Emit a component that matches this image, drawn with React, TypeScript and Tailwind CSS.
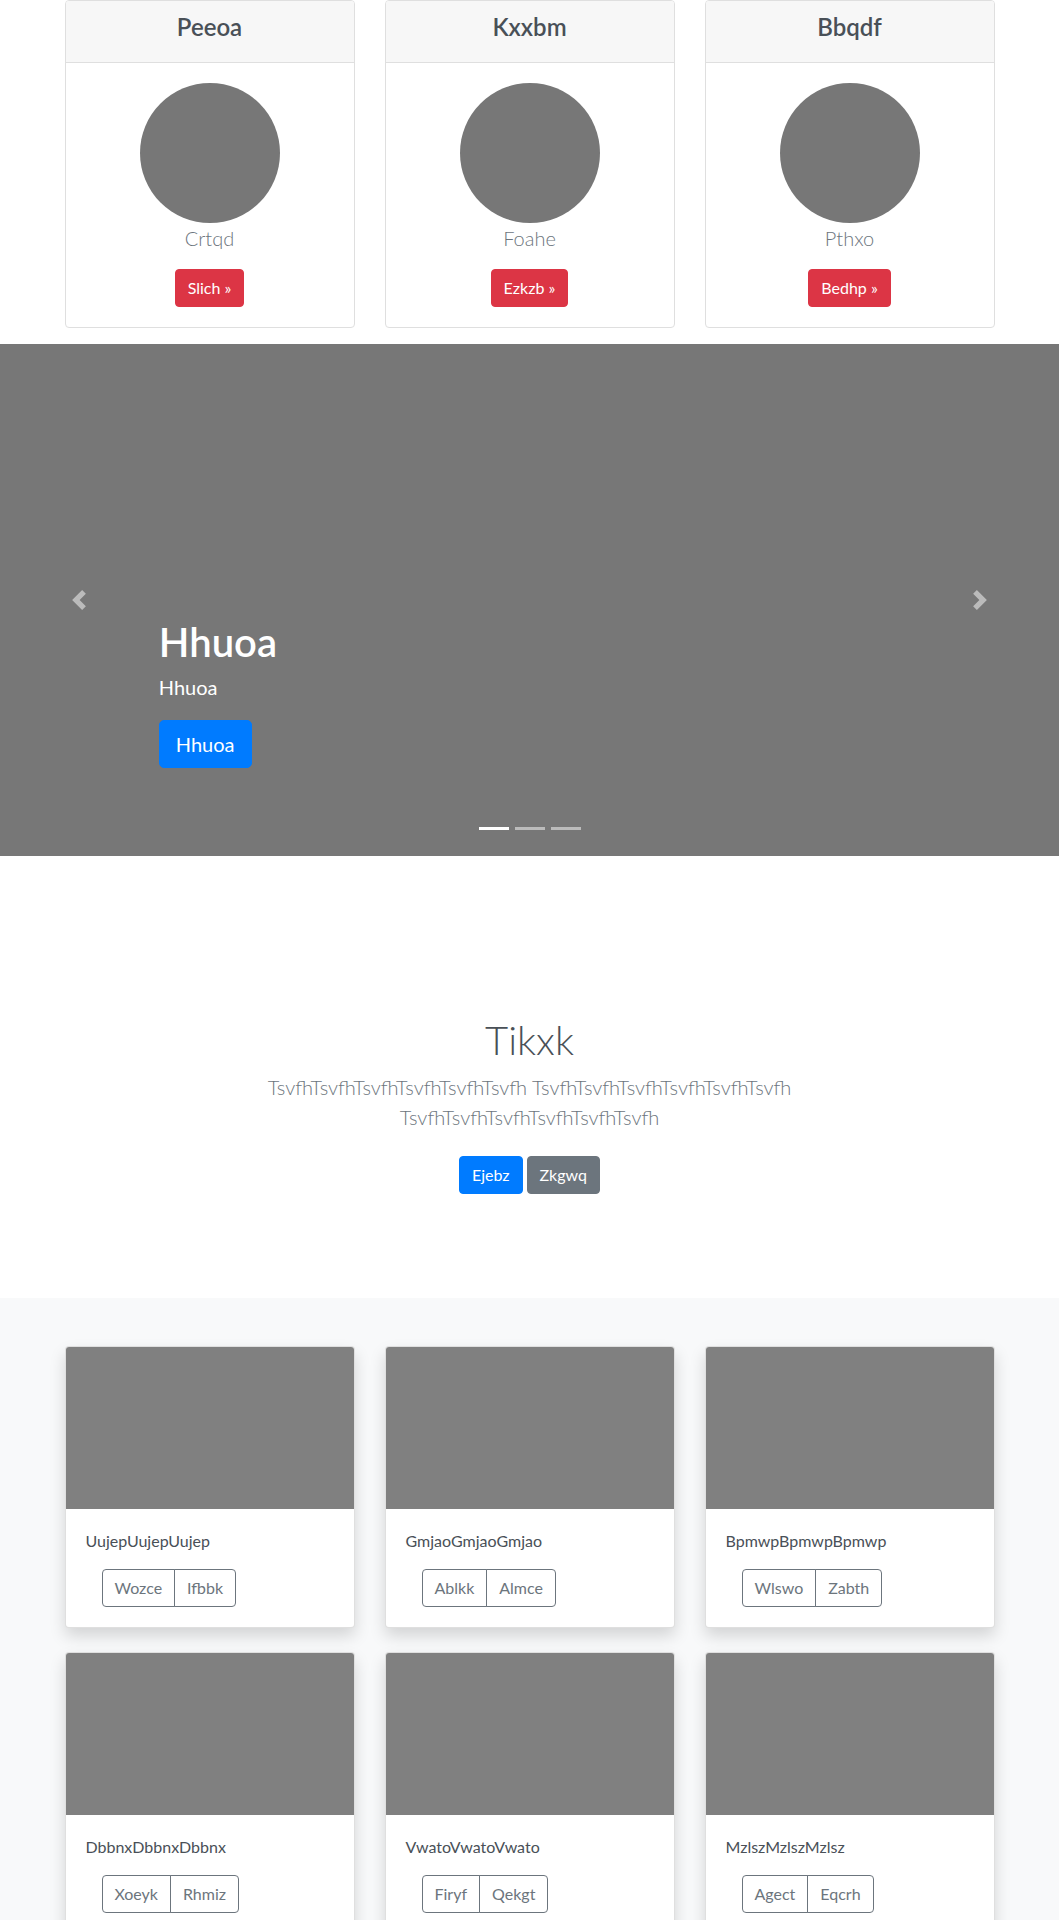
import React from "react";

const teams = [
  { title: "Peeoa", name: "Crtqd", cta: "Slich" },
  { title: "Kxxbm", name: "Foahe", cta: "Ezkzb" },
  { title: "Bbqdf", name: "Pthxo", cta: "Bedhp" },
];

const albums = [
  { text: "UujepUujepUujep", a: "Wozce", b: "Ifbbk" },
  { text: "GmjaoGmjaoGmjao", a: "Ablkk", b: "Almce" },
  { text: "BpmwpBpmwpBpmwp", a: "Wlswo", b: "Zabth" },
  { text: "DbbnxDbbnxDbbnx", a: "Xoeyk", b: "Rhmiz" },
  { text: "VwatoVwatoVwato", a: "Firyf", b: "Qekgt" },
  { text: "MzlszMzlszMzlsz", a: "Agect", b: "Eqcrh" },
];

function TeamCard({ title, name, cta }: { title: string; name: string; cta: string }) {
  return (
    <div className="mb-4 rounded-[4px] border border-[#dfdfdf] bg-white overflow-hidden">
      <div className="border-b border-[#dfdfdf] bg-[#f7f7f7] px-5 pt-3 pb-3 text-center">
        <h4 className="mb-2 text-[24px] leading-[1.2] font-semibold text-[#495057]">{title}</h4>
      </div>
      <div className="flex flex-col items-center p-5">
        <div className="h-[140px] w-[140px] rounded-full bg-[#777777]" />
        <p className="mb-4 text-[20px] leading-[30px] font-light text-[#6c757d]">{name}</p>
        <a className="rounded-[4px] border border-[#dc3545] bg-[#dc3545] px-3 py-[6px] text-base leading-6 text-white">
          {cta} »
        </a>
      </div>
    </div>
  );
}

function Chevron({ dir }: { dir: "left" | "right" }) {
  return (
    <svg width="20" height="20" viewBox="0 0 8 8" fill="#fff">
      {dir === "left" ? (
        <path d="M5.25 0l-4 4 4 4 1.5-1.5L4.25 4l2.5-2.5L5.25 0z" />
      ) : (
        <path d="M2.75 0l-1.5 1.5L3.75 4l-2.5 2.5L2.75 8l4-4-4-4z" />
      )}
    </svg>
  );
}

function Carousel() {
  return (
    <div className="relative mb-16 h-[512px] bg-[#777777]">
      <div className="absolute inset-y-0 left-0 flex w-[15%] items-center justify-center opacity-50">
        <Chevron dir="left" />
      </div>
      <div className="absolute inset-y-0 right-0 flex w-[15%] items-center justify-center opacity-50">
        <Chevron dir="right" />
      </div>
      <div className="absolute left-[15%] right-[15%] bottom-[88px] text-left text-white">
        <h1 className="mb-[6px] text-[40px] leading-[48px] font-semibold">Hhuoa</h1>
        <p className="mb-[18px] text-[20px] leading-[30px]">Hhuoa</p>
        <a className="inline-block rounded-[5px] bg-[#007bff] px-4 py-2 text-[20px] leading-[30px] text-white border border-[#007bff]">
          Hhuoa
        </a>
      </div>
      <div className="absolute left-0 right-0 bottom-[26px] flex justify-center gap-[6px]">
        <span className="h-[3px] w-[30px] bg-white" />
        <span className="h-[3px] w-[30px] bg-white/50" />
        <span className="h-[3px] w-[30px] bg-white/50" />
      </div>
    </div>
  );
}

function AlbumCard({ text, a, b }: { text: string; a: string; b: string }) {
  return (
    <div className="mb-6 overflow-hidden rounded-[4px] border border-black/[0.125] bg-white shadow-[0_8px_16px_rgba(0,0,0,0.15)]">
      <div className="h-[162px] bg-[#808080]" />
      <div className="p-5">
        <p className="mb-4 text-base leading-6 text-[#495057]">{text}</p>
        <div className="ml-4 inline-flex">
          <button className="rounded-l-[4px] border border-[#6c757d] px-3 py-[6px] text-base leading-6 text-[#6c757d]">
            {a}
          </button>
          <button className="-ml-px rounded-r-[4px] border border-[#6c757d] px-3 py-[6px] text-base leading-6 text-[#6c757d]">
            {b}
          </button>
        </div>
      </div>
    </div>
  );
}

export default function App() {
  return (
    <div className="min-h-screen bg-white font-['Segoe_UI',Lato,'Open_Sans',sans-serif] text-[#495057]">
      <div className="mx-auto grid w-[930px] grid-cols-3 gap-x-[30px]">
        {teams.map((t) => (
          <TeamCard key={t.title} {...t} />
        ))}
      </div>

      <Carousel />

      <section className="py-24 text-center">
        <div className="mx-auto max-w-[610px]">
          <h1 className="mb-2 text-[40px] leading-[48px] font-light text-[#495057]">Tikxk</h1>
          <p className="mb-4 text-[20px] leading-[30px] font-light text-[#6c757d]">
            TsvfhTsvfhTsvfhTsvfhTsvfhTsvfh TsvfhTsvfhTsvfhTsvfhTsvfhTsvfh TsvfhTsvfhTsvfhTsvfhTsvfhTsvfh
          </p>
          <div className="flex justify-center gap-1 py-2">
            <a className="rounded-[4px] border border-[#007bff] bg-[#007bff] px-3 py-[6px] text-base leading-6 text-white">
              Ejebz
            </a>
            <a className="rounded-[4px] border border-[#6c757d] bg-[#6c757d] px-3 py-[6px] text-base leading-6 text-white">
              Zkgwq
            </a>
          </div>
        </div>
      </section>

      <div className="bg-[#f8f9fa] py-12">
        <div className="mx-auto grid w-[930px] grid-cols-3 gap-x-[30px]">
          {albums.map((c) => (
            <AlbumCard key={c.text} {...c} />
          ))}
        </div>
      </div>
    </div>
  );
}
